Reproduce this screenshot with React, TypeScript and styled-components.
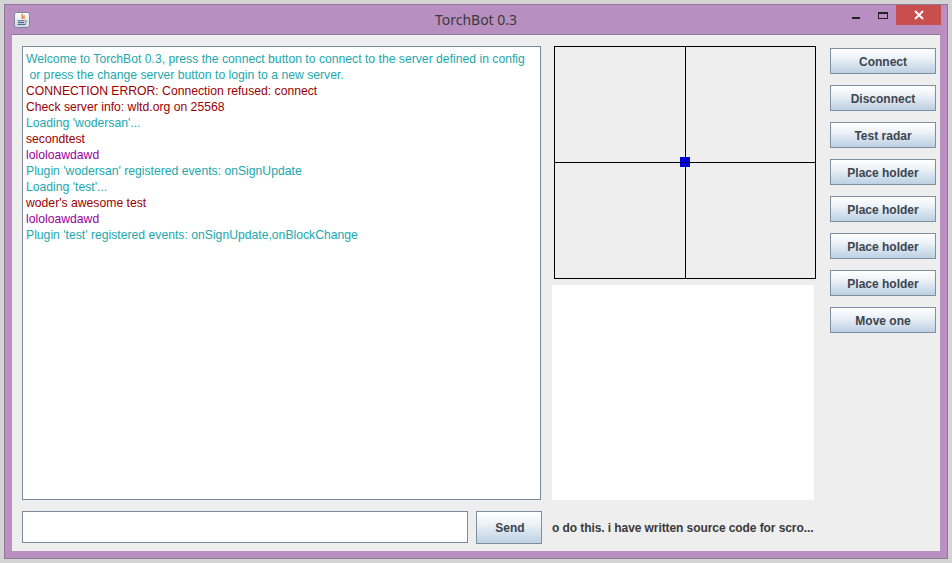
import React from "react";
import styled, { createGlobalStyle } from "styled-components";

const GlobalStyle = createGlobalStyle`
  html, body {
    margin: 0;
    padding: 0;
    background: #d4d4d4;
    font-family: "Liberation Sans", Arial, sans-serif;
  }
`;

const Screen = styled.div`
  width: 952px;
  height: 563px;
  box-sizing: border-box;
  padding: 4px 4px 4px 4px;
  overflow: hidden;
`;

const Frame = styled.div`
  height: 100%;
  box-sizing: border-box;
  display: flex;
  flex-direction: column;
  background: #b88fc0;
  border: 1px solid #8f7a96;
  padding: 0 7px 7px 7px;
`;

const TitleBar = styled.div`
  height: 29px;
  flex: none;
  display: grid;
  grid-template-columns: 1fr auto 1fr;
  align-items: center;
`;

const AppIcon = styled.svg`
  width: 16px;
  height: 16px;
  margin-left: 2px;
`;

const Title = styled.div`
  font-family: "Noto Sans", "Liberation Sans", sans-serif;
  font-size: 14px;
  color: #3a3a3a;
`;

const WindowControls = styled.div`
  display: flex;
  justify-content: flex-end;
  align-items: flex-start;
  align-self: start;
  margin-right: -1px;
`;

const ControlButton = styled.div<{ $wide?: boolean; $danger?: boolean }>`
  width: ${(p) => (p.$wide ? "45px" : "27px")};
  height: 20px;
  display: flex;
  align-items: center;
  justify-content: center;
  background: ${(p) => (p.$danger ? "#c94f4f" : "transparent")};
`;

const Client = styled.div`
  flex: 1;
  min-height: 0;
  border-top: 1px solid #8f7a96;
  background: #eeeeee;
  display: grid;
  grid-template-columns: 519px 275px 120px;
  grid-template-rows: 454px 33px;
  padding: 11px 0 0 10px;
`;

const LogPane = styled.div`
  box-sizing: border-box;
  width: 519px;
  height: 454px;
  background: #fff;
  border: 1px solid #7a8a99;
  padding: 4px 3px;
  font-size: 12.2px;
  line-height: 16px;
  white-space: pre;
`;

const LogLine = styled.div<{ $color: string }>`
  color: ${(p) => p.$color};
`;

const Middle = styled.div`
  margin-left: 11px;
  width: 264px;
  display: flex;
  flex-direction: column;
`;

const Radar = styled.svg`
  display: block;
  width: 262px;
  height: 233px;
  margin-left: 2px;
  background: #eeeeee;
`;

const InfoPane = styled.div`
  width: 262px;
  height: 215px;
  margin-top: 6px;
  background: #fff;
`;

const SideButtons = styled.div`
  margin-left: 14px;
  padding-top: 2px;
  display: flex;
  flex-direction: column;
  gap: 11px;
`;

const JavaButton = styled.button<{ $send?: boolean }>`
  box-sizing: border-box;
  width: ${(p) => (p.$send ? 66 : 106)}px;
  height: ${(p) => (p.$send ? 33 : 26)}px;
  padding: ${(p) => (p.$send ? "0 0 0 2px" : "2px 0 0")};
  border: 1px solid #7d8fa0;
  background: linear-gradient(to bottom, #ffffff 0%, #eef3f8 35%, #bdd0e3 100%);
  font-family: "Liberation Sans", Arial, sans-serif;
  font-size: 12px;
  font-weight: bold;
  color: #3c4550;
`;

const InputRow = styled.div`
  grid-column: 1;
  margin-top: 11px;
  display: flex;
  gap: 8px;
  width: 520px;
`;

const ChatInput = styled.div`
  box-sizing: border-box;
  width: 446px;
  height: 32px;
  background: #fff;
  border: 1px solid #7a8a99;
`;

const StatusLabel = styled.div`
  grid-column: 2 / 4;
  margin: 11px 0 0 11px;
  height: 34px;
  line-height: 34px;
  font-size: 12px;
  font-weight: bold;
  letter-spacing: -0.08px;
  color: #3a3a3a;
  white-space: nowrap;
`;

const log: [string, string][] = [
  ["Welcome to TorchBot 0.3, press the connect button to connect to the server defined in config", "#20a8ac"],
  [" or press the change server button to login to a new server.", "#20a8ac"],
  ["CONNECTION ERROR: Connection refused: connect", "#9c0000"],
  ["Check server info: wltd.org on 25568", "#9c0000"],
  ["Loading 'wodersan'...", "#20a8ac"],
  ["secondtest", "#9c0000"],
  ["lololoawdawd", "#990099"],
  ["Plugin 'wodersan' registered events: onSignUpdate", "#20a8ac"],
  ["Loading 'test'...", "#20a8ac"],
  ["woder's awesome test", "#9c0000"],
  ["lololoawdawd", "#990099"],
  ["Plugin 'test' registered events: onSignUpdate,onBlockChange", "#20a8ac"],
];

const sideLabels = [
  "Connect",
  "Disconnect",
  "Test radar",
  "Place holder",
  "Place holder",
  "Place holder",
  "Place holder",
  "Move one",
];

const App = () => {
  return (
    <Screen>
      <GlobalStyle />
      <Frame>
        <TitleBar>
          <AppIcon viewBox="0 0 16 16">
            <defs>
              <linearGradient id="iconBg" x1="0" y1="0" x2="0" y2="1">
                <stop offset="0" stopColor="#ffffff" />
                <stop offset="1" stopColor="#cfd6e2" />
              </linearGradient>
            </defs>
            <rect x="0.5" y="0.5" width="15" height="15" rx="2" fill="url(#iconBg)" stroke="#7d8698" />
            <path d="M8.6 2c-2.2 2 1.2 2.8-.6 5M10.4 3.6c-1.6 1.2.4 1.8-.6 3.2" fill="none" stroke="#e2702c" strokeWidth="1.2" />
            <path d="M3.5 8.8h7M4 10.6h6M3.5 12.4h8" stroke="#46607f" strokeWidth="1" />
            <path d="M11 8.6c2.4 0 2.2 2-.4 2.4" fill="none" stroke="#46607f" strokeWidth="0.8" />
          </AppIcon>
          <Title>TorchBot 0.3</Title>
          <WindowControls>
            <ControlButton>
              <svg width="12" height="20" viewBox="0 0 12 20">
                <rect x="2" y="12" width="8" height="2" fill="#222" />
              </svg>
            </ControlButton>
            <ControlButton>
              <svg width="12" height="20" viewBox="0 0 12 20">
                <rect x="1.5" y="7.5" width="9" height="6" fill="none" stroke="#222" />
                <rect x="1" y="7" width="10" height="2" fill="#222" />
              </svg>
            </ControlButton>
            <ControlButton $wide $danger>
              <svg width="10" height="10" viewBox="0 0 10 10">
                <path d="M1 1l8 8M9 1l-8 8" stroke="#fff" strokeWidth="1.8" />
              </svg>
            </ControlButton>
          </WindowControls>
        </TitleBar>
        <Client>
          <LogPane>
            {log.map(([text, color], i) => (
              <LogLine key={i} $color={color}>
                {text}
              </LogLine>
            ))}
          </LogPane>
          <Middle>
            <Radar viewBox="0 0 262 233">
              <rect x="0.5" y="0.5" width="261" height="232" fill="none" stroke="#000" />
              <line x1="131.5" y1="0" x2="131.5" y2="233" stroke="#000" />
              <line x1="0" y1="116.5" x2="262" y2="116.5" stroke="#000" />
              <rect x="126" y="111" width="10" height="10" fill="#0000d8" />
              <line x1="131.5" y1="111" x2="131.5" y2="121" stroke="#00006a" />
              <line x1="126" y1="116.5" x2="136" y2="116.5" stroke="#00006a" />
            </Radar>
            <InfoPane />
          </Middle>
          <SideButtons>
            {sideLabels.map((label, i) => (
              <JavaButton key={i}>{label}</JavaButton>
            ))}
          </SideButtons>
          <InputRow>
            <ChatInput />
            <JavaButton $send>Send</JavaButton>
          </InputRow>
          <StatusLabel>o do this. i have written source code for scro...</StatusLabel>
        </Client>
      </Frame>
    </Screen>
  );
};

export default App;
